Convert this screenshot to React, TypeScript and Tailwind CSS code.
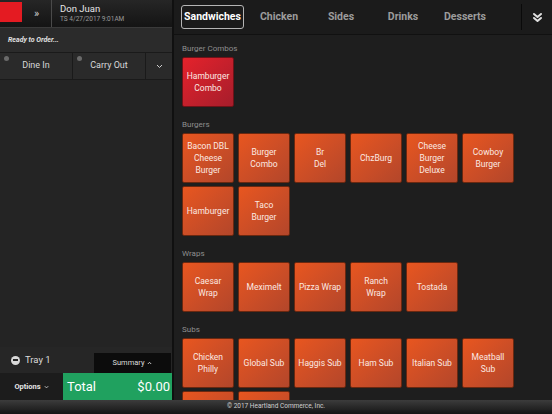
import React from 'react';

type Section = { title: string; items: string[][]; red?: boolean };

const sections: Section[] = [
  { title: 'Burger Combos', items: [['Hamburger', 'Combo']], red: true },
  {
    title: 'Burgers',
    items: [
      ['Bacon DBL', 'Cheese', 'Burger'],
      ['Burger', 'Combo'],
      ['Br', 'Del'],
      ['ChzBurg'],
      ['Cheese', 'Burger', 'Deluxe'],
      ['Cowboy', 'Burger'],
      ['Hamburger'],
      ['Taco', 'Burger'],
    ],
  },
  {
    title: 'Wraps',
    items: [['Caesar', 'Wrap'], ['Meximelt'], ['Pizza Wrap'], ['Ranch', 'Wrap'], ['Tostada']],
  },
  {
    title: 'Subs',
    items: [
      ['Chicken', 'Philly'],
      ['Global Sub'],
      ['Haggis Sub'],
      ['Ham Sub'],
      ['Italian Sub'],
      ['Meatball', 'Sub'],
      // next row is hidden under the footer
      [],
      [],
    ],
  },
];

const tabs = ['Chicken', 'Sides', 'Drinks', 'Desserts'];

function Tile({ lines, red }: { lines: string[]; red?: boolean }) {
  return (
    <div
      className={`w-[52px] h-[50px] rounded-[2px] border flex flex-col items-center justify-center text-center text-[8.5px] leading-[12px] text-[#fbe9e2] ${
        red
          ? 'bg-gradient-to-br from-[#e5222b] to-[#a61d2b] border-[#6e1218]'
          : 'bg-gradient-to-br from-[#e8561f] to-[#b3462a] border-[#6a2810]'
      }`}
    >
      {lines.map((l, i) => (
        <span key={i}>{l}</span>
      ))}
    </div>
  );
}

function LeftPanel() {
  return (
    <div className="w-[172px] h-full flex flex-col bg-[#242424]">
      {/* header */}
      <div className="h-[27px] flex items-stretch bg-gradient-to-b from-[#262626] to-[#141414]">
        <div className="w-[22px] h-[20px] mt-[2px] bg-[#e41b22]" />
        <div className="w-[29px] flex items-center justify-center text-[#cfcfcf] text-[11px] leading-none">»</div>
        <div className="w-px bg-[#4a4a4a]" />
        <div className="flex flex-col justify-center pl-[8px]">
          <span className="text-[9.5px] leading-[12px] text-[#e6e6e6]">Don Juan</span>
          <span className="text-[6.5px] leading-[9px] text-[#9a9a9a]">TS 4/27/2017 9:01AM</span>
        </div>
      </div>
      {/* status */}
      <div className="h-[26px] flex items-center pl-[8px] bg-[#2b2b2b] border-t border-[#3a3a3a] border-b border-b-[#1a1a1a]">
        <span className="text-[7px] italic font-bold text-[#e0e0e0]">Ready to Order...</span>
      </div>
      {/* order type */}
      <div className="h-[27px] flex bg-[#2a2a2a] border-b border-[#1a1a1a]">
        {['Dine In', 'Carry Out'].map((t) => (
          <div
            key={t}
            className="relative w-[73px] flex items-center justify-center border-r border-[#1a1a1a] text-[9px] text-[#d8d8d8]"
          >
            <span className="absolute left-[4px] top-[3px] w-[5px] h-[5px] rounded-full bg-[#6a6a6a]" />
            {t}
          </div>
        ))}
        <div className="flex-1 flex items-center justify-center">
          <svg width="7" height="5" viewBox="0 0 7 5" fill="none" stroke="#cfcfcf" strokeWidth="1">
            <path d="M1 1l2.5 2.5L6 1" />
          </svg>
        </div>
      </div>
      <div className="flex-1" />
      {/* tray */}
      <div className="h-[26px] flex items-center bg-[#262626]">
        <div className="flex items-center pl-[11px] gap-[5px] flex-1">
          <div className="w-[9px] h-[9px] rounded-full bg-[#d8d8d8] flex items-center justify-center">
            <div className="w-[5px] h-[1.5px] bg-[#262626]" />
          </div>
          <span className="text-[9.5px] text-[#dcdcdc]">Tray 1</span>
        </div>
        <div className="w-[77px] h-[20px] self-end mr-[1px] bg-[#0c0c0c] flex items-center justify-center gap-[3px] text-[7.5px] text-[#dcdcdc]">
          Summary
          <svg width="5" height="4" viewBox="0 0 5 4" fill="none" stroke="#dcdcdc" strokeWidth="0.9">
            <path d="M0.8 3L2.5 1.3 4.2 3" />
          </svg>
        </div>
      </div>
      {/* options + total */}
      <div className="h-[27px] flex bg-[#1c1c1c]">
        <div className="w-[63px] flex items-center justify-center gap-[3px] text-[7.5px] font-bold text-[#e6e6e6]">
          Options
          <svg width="5" height="4" viewBox="0 0 5 4" fill="none" stroke="#cfcfcf" strokeWidth="0.9">
            <path d="M0.8 1.2L2.5 2.9 4.2 1.2" />
          </svg>
        </div>
        <div className="flex-1 bg-[#20a15f] flex items-center justify-between pl-[4px] pr-[2px] text-[13px] text-white">
          <span>Total</span>
          <span>$0.00</span>
        </div>
      </div>
    </div>
  );
}

function RightPanel() {
  return (
    <div className="flex-1 h-full flex flex-col bg-[#1e1e1e] overflow-hidden">
      <div className="h-[35px] shrink-0 flex items-center bg-[#1b1b1b] border-b border-[#111]">
        <div className="ml-[7px] w-[63px] h-[24px] rounded-[3px] border border-[#b5b5b5] flex items-center justify-center text-[10.5px] font-bold text-white">
          Sandwiches
        </div>
        <div className="ml-[4px] flex">
          {tabs.map((t) => (
            <div key={t} className="w-[62px] text-center text-[10.5px] font-bold text-[#9c9c9c]">
              {t}
            </div>
          ))}
        </div>
        <div className="ml-[25px] w-px h-[26px] bg-[#0a0a0a]" />
        <div className="flex-1 flex items-center justify-center">
          <svg width="11" height="11" viewBox="0 0 11 11" fill="none" stroke="#e0e0e0" strokeWidth="2" strokeLinecap="round" strokeLinejoin="round">
            <path d="M2 2l3.5 3 3.5-3" />
            <path d="M2 6l3.5 3 3.5-3" />
          </svg>
        </div>
      </div>
      <div className="flex-1 overflow-hidden pl-[8px] pt-[8px]">
        {sections.map((s, i) => (
          <div key={s.title} className={i === 0 ? '' : 'mt-[12px]'}>
            <div className="text-[8px] leading-[12px] text-[#8e8e8e] mb-[2px]">{s.title}</div>
            <div className="grid grid-cols-[repeat(6,52px)] gap-x-[4px] gap-y-[3px]">
              {s.items.map((lines, j) => (
                <Tile key={j} lines={lines} red={s.red} />
              ))}
            </div>
          </div>
        ))}
      </div>
    </div>
  );
}

export default function App() {
  return (
    <div className="w-[552px] h-[414px] flex flex-col bg-[#1e1e1e] overflow-hidden" style={{ fontFamily: 'Roboto, "Noto Sans", sans-serif' }}>
      <div className="flex-1 flex min-h-0">
        <LeftPanel />
        <div className="w-[2px] bg-[#101010]" />
        <RightPanel />
      </div>
      <div className="h-[14px] shrink-0 flex items-center justify-center bg-gradient-to-b from-[#3c3c3c] to-[#161616] text-[6.5px] text-[#cfcfcf]">
        © 2017 Heartland Commerce, Inc.
      </div>
    </div>
  );
}
